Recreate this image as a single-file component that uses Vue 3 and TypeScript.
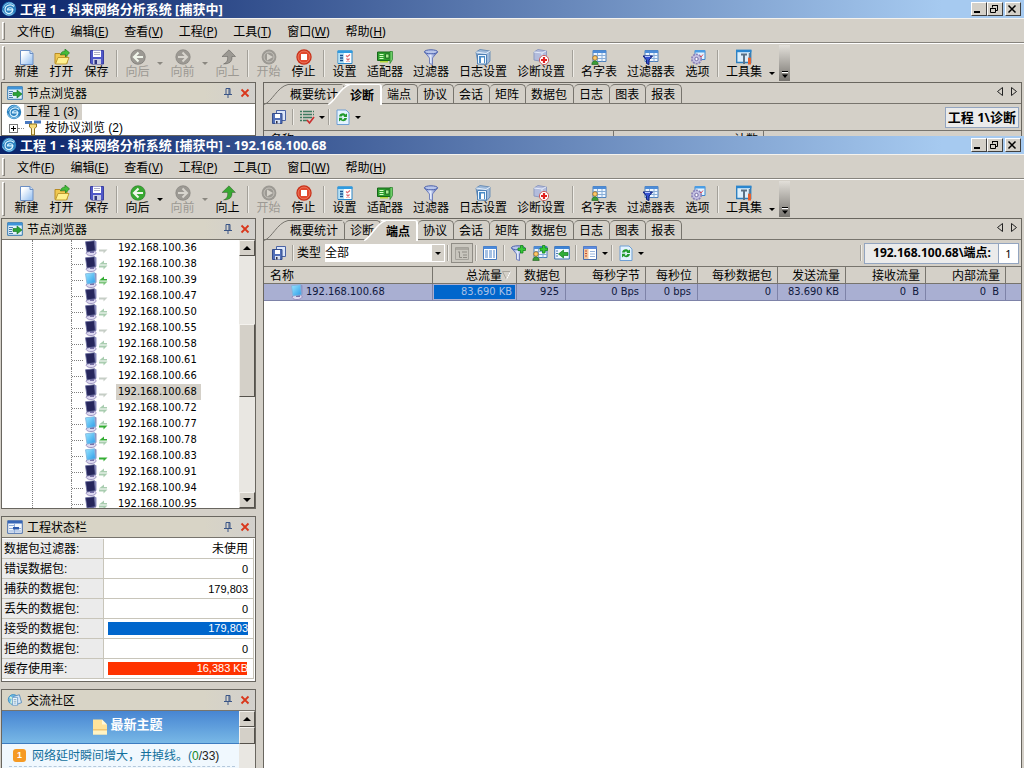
<script setup lang="ts">
import { ref } from 'vue'

interface Tool {
  label?: string
  icon?: string
  disabled?: boolean
  drop?: boolean
  sep?: boolean
}

interface Win {
  id: string
  title: string
  tab: string
  nav: boolean
  tools: Tool[]
}

const menus = [
  ['文件', 'F'],
  ['编辑', 'E'],
  ['查看', 'V'],
  ['工程', 'P'],
  ['工具', 'T'],
  ['窗口', 'W'],
  ['帮助', 'H'],
]

function toolbar(back: boolean): Tool[] {
  return [
    { label: '新建', icon: 'new' },
    { label: '打开', icon: 'open' },
    { label: '保存', icon: 'save' },
    { sep: true },
    { label: '向后', icon: 'back', disabled: !back, drop: true },
    { label: '向前', icon: 'fwd', disabled: true, drop: true },
    { label: '向上', icon: 'up', disabled: !back },
    { sep: true },
    { label: '开始', icon: 'start', disabled: true },
    { label: '停止', icon: 'stop' },
    { sep: true },
    { label: '设置', icon: 'setting' },
    { label: '适配器', icon: 'adapter' },
    { label: '过滤器', icon: 'filter' },
    { label: '日志设置', icon: 'log' },
    { label: '诊断设置', icon: 'diag' },
    { sep: true },
    { label: '名字表', icon: 'names' },
    { label: '过滤器表', icon: 'ftable' },
    { label: '选项', icon: 'options' },
    { sep: true },
    { label: '工具集', icon: 'tools', drop: true },
  ]
}

const windows: Win[] = [
  { id: 'project', title: '工程 1 - 科来网络分析系统 [捕获中]', tab: '诊断', nav: false, tools: toolbar(false) },
  { id: 'host', title: '工程 1 - 科来网络分析系统 [捕获中] - 192.168.100.68', tab: '端点', nav: true, tools: toolbar(true) },
]

const tabs = ['概要统计', '诊断', '端点', '协议', '会话', '矩阵', '数据包', '日志', '图表', '报表']

const off = '#c6cec6'
const dim = '#a9cdb0'
const lit = '#35ad35'

const hosts = [
  { ip: 36, on: false, up: '', down: off },
  { ip: 38, on: false, up: dim, down: dim },
  { ip: 39, on: true, up: lit, down: '#7cc47c' },
  { ip: 47, on: false, up: '', down: off },
  { ip: 50, on: false, up: dim, down: dim },
  { ip: 55, on: false, up: '', down: off },
  { ip: 58, on: false, up: dim, down: dim },
  { ip: 61, on: false, up: dim, down: dim },
  { ip: 66, on: false, up: '', down: off },
  { ip: 68, on: false, up: '', down: off },
  { ip: 72, on: false, up: dim, down: dim },
  { ip: 77, on: true, up: dim, down: lit },
  { ip: 78, on: true, up: lit, down: dim },
  { ip: 83, on: true, up: '', down: lit },
  { ip: 91, on: false, up: dim, down: dim },
  { ip: 94, on: false, up: dim, down: dim },
  { ip: 95, on: false, up: dim, down: dim },
]

const stats = [
  { name: '数据包过滤器:', value: '未使用' },
  { name: '错误数据包:', value: '0' },
  { name: '捕获的数据包:', value: '179,803' },
  { name: '丢失的数据包:', value: '0' },
  { name: '接受的数据包:', value: '179,803', color: '#0066cc', fill: 100 },
  { name: '拒绝的数据包:', value: '0' },
  { name: '缓存使用率:', value: '16,383 KB', color: '#ff3300', fill: 99 },
]

const columns = [
  { name: '名称', width: 169, value: '192.168.100.68' },
  { name: '总流量', width: 84, value: '83.690 KB' },
  { name: '数据包', width: 49, value: '925' },
  { name: '每秒字节', width: 80, value: '0 Bps' },
  { name: '每秒位', width: 52, value: '0 bps' },
  { name: '每秒数据包', width: 80, value: '0' },
  { name: '发送流量', width: 68, value: '83.690 KB' },
  { name: '接收流量', width: 80, value: '0  B' },
  { name: '内部流量', width: 80, value: '0  B' },
]

const kind = ref('全部')
</script>

<template>
  <svg class="defs" aria-hidden="true">
    <defs>
      <linearGradient id="g-blue" x1="0" y1="0" x2="1" y2="1">
        <stop offset=".2" stop-color="#fff" /><stop offset="1" stop-color="#8fbcf0" />
      </linearGradient>
      <linearGradient id="g-funnel" x1="0" x2="1">
        <stop offset="0" stop-color="#5a6fc0" /><stop offset=".45" stop-color="#e6eeff" /><stop offset="1" stop-color="#3d52a8" />
      </linearGradient>
      <linearGradient id="g-screen" x1="0" y1="0" x2="1" y2="1">
        <stop offset="0" stop-color="#9be6ff" /><stop offset="1" stop-color="#2a9be8" />
      </linearGradient>
    </defs>
    <symbol id="i-logo" viewBox="0 0 16 16">
      <circle cx="8" cy="8" r="7.2" fill="#2b80bf" />
      <path d="M14 4.5A6.6 6.6 0 0 0 2.4 6.8M1.6 9.5a6.6 6.6 0 0 0 11 2.5" fill="none" stroke="#8fcdf0" />
      <path d="M12.500 8.800H6.500c0-2.300 4.600-3 5.200-.3.300 3-3 4.800-5.600 3.600-3-1.400-2.800-6 .4-7.600 2.400-1 4.800-.6 6.500 1" fill="none" stroke="#d8f2ff" stroke-width="1.200" />
    </symbol>
    <symbol id="i-new" viewBox="0 0 16 16">
      <path d="M1.500 1.500h9.500l3 3v11H1.500z" fill="url(#g-blue)" stroke="#6a8ec4" />
      <path d="M11 1.500v3h3" fill="#cfe2fa" stroke="#6a8ec4" />
    </symbol>
    <symbol id="i-open" viewBox="0 0 16 16">
      <path d="M1 4.500h5L7 6h6v8.500H1z" fill="#f0c850" stroke="#b88c24" />
      <path d="M1.500 15 4 8.500h11L12.500 15z" fill="#fff08e" stroke="#c09a30" />
      <path d="M6.500 6c.5-3 2.500-4 4.500-3.800V0l4.500 3.800L11.500 8V5.500c-2-.4-3.500-.3-5 .5z" fill="#45bd3a" stroke="#1c7d1c" stroke-width=".7" />
    </symbol>
    <symbol id="i-save" viewBox="0 0 16 16">
      <path d="M1.500 1.500h13v13.500h-12l-1-1z" fill="#5058c8" stroke="#3a3fa0" />
      <path d="M4 1.500h8v6.500H4z" fill="#fff" /><path d="M5 3.500h6M5 5.500h6" stroke="#b0b0c4" />
      <path d="M4 10h8v5H4z" fill="#c9cce4" /><path d="M5.500 11h2.500v4H5.500z" fill="#303680" />
    </symbol>
    <symbol id="i-back" viewBox="0 0 16 16">
      <circle cx="8" cy="8" r="7.400" fill="currentColor" stroke="#00000030" />
      <path d="M8.500 3.500 4 8l4.500 4.500M4.500 8H13" fill="none" stroke="#f0f5ea" stroke-width="2.200" />
    </symbol>
    <symbol id="i-fwd" viewBox="0 0 16 16">
      <circle cx="8" cy="8" r="7.400" fill="currentColor" stroke="#00000020" />
      <path d="M7.500 3.500 12 8l-4.500 4.500M11.500 8H3" fill="none" stroke="#d8d5ce" stroke-width="2" />
    </symbol>
    <symbol id="i-up" viewBox="0 0 16 16">
      <path d="M9 .8 15.500 7.500H12c.5 5-2.500 7.500-8.500 7.500 3.500-1.500 4.500-4 4-7.500H2z" fill="currentColor" stroke="#00000050" stroke-width=".8" />
    </symbol>
    <symbol id="i-start" viewBox="0 0 16 16">
      <circle cx="8" cy="8" r="7.400" fill="currentColor" /><circle cx="8" cy="8" r="5" fill="none" stroke="#c5c2bb" />
      <path d="M6 4.500 12 8l-6 3.500z" fill="#d5d2ca" />
    </symbol>
    <symbol id="i-stop" viewBox="0 0 16 16">
      <circle cx="8" cy="8" r="7.700" fill="#c93018" /><circle cx="8" cy="8" r="6" fill="#e2492e" stroke="#f0917a" stroke-width=".7" />
      <rect x="5" y="5" width="6" height="6" fill="#fff" />
    </symbol>
    <symbol id="i-setting" viewBox="0 0 16 16">
      <path d="M1 2h14v12.500H1z" fill="#fff" stroke="#2a86c8" /><path d="M.5 1.500h15V4H.5z" fill="#2f9be0" />
      <path d="M1.500 4H7v10H1.500z" fill="#b6e2f6" /><path d="M3 6.500h3M3 9h3M3 11.500h3" stroke="#174f91" stroke-width="1.500" />
      <path d="m9 6.500 1.300 1.200L13 5.500M9.500 9.500l3 3m0-3-3 3" fill="none" stroke="#e06a70" stroke-width="1.200" />
    </symbol>
    <symbol id="i-adapter" viewBox="0 0 16 16">
      <path d="M.5 3H14v8.500H.5z" fill="#2e9f2e" stroke="#176619" /><path d="M2.500 5h4v1h-4zM2.500 7h4v1h-4zM2.500 9h4v1h-4z" fill="#d8ffc4" />
      <path d="M8.500 5h3.500v4H8.500z" fill="#a4ec8c" stroke="#165d1c" stroke-width=".8" /><path d="M3 12h8v1.500H3z" fill="#b2d838" />
      <path d="M13 2.500h2.500v8L13 14.500z" fill="#6ecf68" stroke="#237d26" stroke-width=".7" />
    </symbol>
    <symbol id="i-filter" viewBox="0 0 16 16">
      <path d="M1.500 3 6.500 9v5.500l3 1V9l5-6z" fill="url(#g-funnel)" stroke="#5a6cb4" stroke-width=".8" />
      <ellipse cx="8" cy="2.800" rx="6.600" ry="2" fill="#b9c6ea" stroke="#4a60ac" />
    </symbol>
    <symbol id="i-log" viewBox="0 0 16 16">
      <path d="m1 3 4-2.500 10 1.500V12l-3 3.500-9-1z" fill="#9db9da" stroke="#6d8fb5" /><path d="m1 3 10 1.500L15 2" fill="none" stroke="#e4effa" />
      <path d="M2.500 5.500h9V15h-9z" fill="#eef7ff" stroke="#4f80b4" /><path d="M4 7h6v7H4z" fill="#4a8cc8" /><path d="M6 8.500h3v5.500H6z" fill="#fff" />
    </symbol>
    <symbol id="i-diag" viewBox="0 0 16 16">
      <path d="m1 3 4-2.500 8.500 1.500V9l-4 3.500L1 11z" fill="#b3bcdc" stroke="#8d9ac0" /><path d="m1 3 8 1v8M9 4l4-2" fill="none" stroke="#e6ecfa" />
      <circle cx="11" cy="11" r="4.600" fill="#fff" stroke="#c96060" /><path d="M11 8v6M8 11h6" stroke="#e02222" stroke-width="2.200" />
    </symbol>
    <symbol id="i-table" viewBox="0 0 16 16">
      <path d="M2 1.500h13v11H2z" fill="#eef6ff" stroke="#4d80bb" /><path d="M2 1.500h13V4H2z" fill="#4c8cd8" />
      <path d="M2 6.500h13M2 9.500h13M6.500 4v8.500M11 4v8.500" stroke="#88aed8" />
    </symbol>
    <symbol id="i-names" viewBox="0 0 16 16">
      <use href="#i-table" /><circle cx="4" cy="9" r="2.300" fill="#ffca6a" stroke="#8c5c14" stroke-width=".7" />
      <path d="M.8 15.500c0-5 6.400-5 6.400 0z" fill="#3a9c38" stroke="#1d621e" stroke-width=".6" />
    </symbol>
    <symbol id="i-ftable" viewBox="0 0 16 16">
      <use href="#i-table" /><path d="M0 7h9.500L6 11v4.500L3.500 14.500V11z" fill="#3451d0" stroke="#101f78" /><path d="M2 7.500h5" stroke="#b8c8ff" />
    </symbol>
    <symbol id="i-options" viewBox="0 0 16 16">
      <path d="M5 1.500h10v9H5z" fill="#e5f4ff" stroke="#3b86cf" /><path d="M5 1h10v2.500H5z" fill="#4a9de4" />
      <circle cx="6.500" cy="10" r="4.700" fill="#c4c0e2" stroke="#8a80b8" stroke-width="1.600" stroke-dasharray="2 1" /><circle cx="6.500" cy="10" r="1.700" fill="#fff" stroke="#746aa5" />
      <path d="m10 7 1 1 2-2.500" fill="none" stroke="#d64b5a" />
    </symbol>
    <symbol id="i-tools" viewBox="0 0 16 16">
      <path d="M.7 1.500h14v12H.7z" fill="#dceffc" stroke="#2e7fbe" stroke-width="1.400" /><path d="M0 .8h15.400v2.400H0z" fill="#2a86cf" />
      <path d="M5 4.500h6v2H9V15H7V6.500H5z" fill="#5b7184" /><path d="M12 8.500h3V15.500h-3z" fill="#e8602c" /><path d="M13.500 4v5" stroke="#667d92" stroke-width="1.500" />
    </symbol>
    <symbol id="i-node" viewBox="0 0 16 14">
      <path d="M.7.700h14.600v12.600H.7z" fill="#e2f1fb" stroke="#3077b0" /><path d="M1 1h14v2.500H1z" fill="#3f94d8" />
      <path d="M2 5.500h4M2 7.500h3M2 9.500h3M2 11.500h4" stroke="#4a7cac" /><path d="M6 6.500h4V4l5 4-5 4V9.500H6z" fill="#2aa336" stroke="#12701d" stroke-width=".6" />
    </symbol>
    <symbol id="i-status" viewBox="0 0 16 14">
      <path d="M.7.700h14.600v12.600H.7z" fill="#f2f7fd" stroke="#456cab" /><path d="M1 1h14v2.500H1z" fill="#3766b6" />
      <path d="M2 5.500h5M2 8.500h12M2 11h12M7.500 4v9" stroke="#8facd8" /><path d="M6 7h6v2.500H6z" fill="#2c5aad" />
    </symbol>
    <symbol id="i-comm" viewBox="0 0 16 16">
      <circle cx="6" cy="7.500" r="5.700" fill="#6bbce8" stroke="#3b8cc0" /><path d="M2 5c2 1 3 0 3 2s-2 3-1 5" stroke="#d8f8d8" stroke-width="2" fill="none" />
      <path d="m6 4 7-2 2.500 9-7 2.500z" fill="#d8e8f8" stroke="#5288b8" /><path d="M5 5h6v9H5z" fill="#eaf4fd" stroke="#6c9cc8" /><path d="M6.500 7.500h3M6.500 9.500h3M6.500 11.500h3" stroke="#8ab" />
    </symbol>
    <symbol id="i-pin" viewBox="0 0 10 10">
      <path d="M3 .5v5.500M3 .5h4M7 .5v5.500M1 6.500h8M5 7v3" fill="none" stroke="#3a5586" /><path d="M5.500 1h1v5h-1z" fill="#3a5586" />
    </symbol>
    <symbol id="i-close" viewBox="0 0 10 10">
      <path d="m1.500 1.500 7 7m0-7-7 7" stroke="#d9371c" stroke-width="1.800" />
    </symbol>
    <symbol id="i-stand" viewBox="0 0 14 16">
      <path d="M2 13c2-3 9-3.500 10-.5.500 3.500-9 4.500-10 .5z" fill="#dcd8f0" stroke="#8a80b4" stroke-width=".8" /><path d="M6 10.500 10 10v3H6z" fill="#7a72a8" />
      <path d="m10.500.5 2 1v9l-1.500.5z" fill="#8d8fc0" />
    </symbol>
    <symbol id="i-mon" viewBox="0 0 14 16">
      <use href="#i-stand" /><path d="M1.500 1.800 10.500.7l.8 10L3 12z" fill="#26265c" stroke="#6b6f9f" stroke-width=".8" />
    </symbol>
    <symbol id="i-monon" viewBox="0 0 14 16">
      <use href="#i-stand" /><path d="M1.500 1.800 10.500.7l.8 10L3 12z" fill="url(#g-screen)" stroke="#7fb2dc" stroke-width=".8" />
    </symbol>
    <symbol id="i-saveall" viewBox="0 0 16 16">
      <path d="M5.500 1.500h9v10h-9z" fill="#dbe6fa" stroke="#4a63a4" /><path d="M1.500 4.500h9.500v10H1.500z" fill="#5270b8" stroke="#344d8c" />
      <path d="M4 5h5v4H4z" fill="#fff" /><path d="M4 11h5v3.500H4z" fill="#d9e2f2" /><path d="M5 12h1.500v2.500H5z" fill="#334" />
    </symbol>
    <symbol id="i-check" viewBox="0 0 16 16">
      <path d="M1 2.500h14M1 5.500h14M1 8.500h12M1 11.500h7" stroke="#3d7a60" stroke-width="1.400" stroke-dasharray="2 1 9 1" /><path d="m8 11 2.500 3L15 8" fill="none" stroke="#c93030" stroke-width="1.700" />
    </symbol>
    <symbol id="i-refresh" viewBox="0 0 16 16">
      <path d="M2 1h9l3 3v11.500H2z" fill="#e4f3ff" stroke="#6e9fd4" />
      <path d="M4 7.500C4.500 4 9 3.500 10.300 5.500L12 4.500V8H8.500L9.300 7c-1-1-2.300-.5-2.500.5zM12 9c-.5 3.500-5 4-6.300 2L4 12.500V8.800h3.600l-.9 1.200c1 1 2.300.5 2.500-1z" fill="#229b2d" />
    </symbol>
    <symbol id="i-tree" viewBox="0 0 16 16">
      <path d="M1.500 2.500h13v12h-13z" fill="#c8c5bd" stroke="#a5a29b" /><path d="M1.500 4h13M4 7h2M5.500 7v5.500H8M8 7h5M9 10h4M9 12.500h4" fill="none" stroke="#8f8c85" />
    </symbol>
    <symbol id="i-list" viewBox="0 0 16 16">
      <path d="M1.500 1.500h13v13h-13z" fill="#fff" stroke="#4679bd" /><path d="M1.500 1.500h13V4h-13z" fill="#4a8adb" />
      <path d="M3 6h3M7 6h3M11 6h2M3 8h3M7 8h3M11 8h2M3 10h3M7 10h3M11 10h2M3 12h3M7 12h3M11 12h2" stroke="#4b82c8" />
    </symbol>
    <symbol id="i-plus" viewBox="0 0 16 16">
      <path d="M10.500.5h2.500v2.500h2.500v2.500H13V8h-2.500V5.500H8V3h2.500z" fill="#37c837" stroke="#11851b" stroke-width=".8" />
    </symbol>
    <symbol id="i-filteradd" viewBox="0 0 16 16"><use href="#i-filter" /><use href="#i-plus" /></symbol>
    <symbol id="i-nameadd" viewBox="0 0 16 16"><use href="#i-names" /><use href="#i-plus" /></symbol>
    <symbol id="i-import" viewBox="0 0 16 16">
      <path d="M.7 1.500h14.600v12.500H.7z" fill="#f0f8ff" stroke="#3d72b5" /><path d="M1 1.500h14V4H1z" fill="#3d83d5" />
      <path d="M2 6h2M2 8.500h2M2 11h2" stroke="#4a7ab5" /><path d="M14 7.500H9.500V5L4.500 9l5 4v-2.500H14z" fill="#2fae38" stroke="#137a1d" stroke-width=".7" />
    </symbol>
    <symbol id="i-cols" viewBox="0 0 16 16">
      <path d="M1.500 1.500h13v13h-13z" fill="#fff" stroke="#4b6fae" /><path d="M1.500 1.500h13V4h-13z" fill="#5c8ce0" /><path d="M2 4h4.500v10H2z" fill="#f3c79d" />
      <path d="M3 6h2M3 8.500h2M3 11h2" stroke="#c44a35" /><path d="M8 6.500h5M8 9h5M8 11.500h5" stroke="#98b4dc" />
    </symbol>
    <symbol id="i-proto" viewBox="0 0 16 16">
      <path d="M0 2.500h7M9 2h7" stroke="#4778c0" stroke-width="3" /><path d="M4.500 4h7v3l-2 1.500V15h-3V8.500L4.500 7z" fill="#f6db78" stroke="#907420" /><path d="M8 8v6" stroke="#fff" />
    </symbol>
    <symbol id="i-topic" viewBox="0 0 16 16">
      <path d="M1 .5h9l5 5v10H1z" fill="#ffe39a" /><path d="M10 .5v5h5z" fill="#fff8da" /><path d="M1 11h14" stroke="#e4a84a" /><path d="M1 11.500h14v4H1z" fill="#fff3c4" />
    </symbol>
  </svg>

  <main class="desk">
    <section v-for="w in windows" :key="w.id" class="win" :class="w.id">
      <header class="title">
        <svg class="ic"><use href="#i-logo" /></svg>
        <h1>{{ w.title }}</h1>
        <button class="cap" aria-label="最小化"><svg viewBox="0 0 12 10"><path d="M2 8h6" stroke="#000" stroke-width="2" /></svg></button>
        <button class="cap" aria-label="还原">
          <svg viewBox="0 0 12 10"><path d="M4.500 3.500v-2h5v5h-2M4 1.500h6M2.500 4.500h5v4h-5zM2 4.500h6" fill="none" stroke="#000" /></svg>
        </button>
        <button class="cap shut" aria-label="关闭"><svg viewBox="0 0 12 10"><path d="m2.500 1.500 7 7m0-7-7 7" stroke="#000" stroke-width="1.500" /></svg></button>
      </header>

      <nav class="menu">
        <i class="grip"></i>
        <button v-for="m in menus" :key="m[1]">{{ m[0] }}(<u>{{ m[1] }}</u>)</button>
      </nav>

      <div class="toolbar">
        <i class="grip"></i>
        <template v-for="(t, n) in w.tools" :key="n">
          <i v-if="t.sep" class="sep"></i>
          <template v-else>
            <button class="tool" :class="['t-' + t.icon, 'n' + t.label?.length]" :disabled="t.disabled">
              <svg class="ic"><use :href="'#i-' + t.icon" /></svg>
              <span>{{ t.label }}</span>
            </button>
            <button v-if="t.drop" class="drop" :class="{ low: t.icon === 'tools' }" :disabled="t.disabled" :aria-label="t.label + '选项'"></button>
          </template>
        </template>
        <button class="more" aria-label="更多"><svg viewBox="0 0 11 36"><path d="M3 27.500h6" stroke="#fff" /><path d="M3 26.500h6" stroke="#000" /><path d="M3 29.500h6L6 33z" fill="#000" /></svg></button>
      </div>

      <div class="body">
        <aside class="side">
          <section class="panel nodes">
            <header class="phead">
              <svg class="pic"><use href="#i-node" /></svg>
              <h2>节点浏览器</h2>
              <button aria-label="固定"><svg><use href="#i-pin" /></svg></button>
              <button aria-label="关闭"><svg><use href="#i-close" /></svg></button>
            </header>
            <div v-if="!w.nav" class="roots">
              <div class="root"><svg class="ic"><use href="#i-logo" /></svg><span class="picked">工程 1 (3)</span></div>
              <div class="root branch"><i class="expand"></i><i class="dash"></i><svg class="ic"><use href="#i-proto" /></svg><span>按协议浏览 (2)</span></div>
            </div>
            <div v-else class="tree">
              <ul>
                <li v-for="h in hosts" :key="h.ip">
                  <i class="twig"></i>
                  <svg class="mon"><use :href="h.on ? '#i-monon' : '#i-mon'" /></svg>
                  <svg class="flow" viewBox="0 0 9 10">
                    <path v-if="h.up" d="M0 4.500h8V3H5V.5z" :fill="h.up" />
                    <path d="M0 5.500h8.500L4.500 9.500V7.500H0z" :fill="h.down" />
                  </svg>
                  <span :class="{ picked: h.ip === 68 }">192.168.100.{{ h.ip }}</span>
                </li>
              </ul>
              <div class="scroll">
                <button class="go-up" aria-label="向上滚动"></button>
                <i class="track"></i>
                <i class="thumb"></i>
                <i class="track rest"></i>
                <button class="go-down" aria-label="向下滚动"></button>
              </div>
            </div>
          </section>

          <template v-if="w.nav">
            <section class="panel">
              <header class="phead">
                <svg class="pic"><use href="#i-status" /></svg>
                <h2>工程状态栏</h2>
                <button aria-label="固定"><svg><use href="#i-pin" /></svg></button>
                <button aria-label="关闭"><svg><use href="#i-close" /></svg></button>
              </header>
              <table class="stats">
                <tbody>
                  <tr v-for="s in stats" :key="s.name">
                    <th scope="row">{{ s.name }}</th>
                    <td>
                      <div v-if="s.color" class="bar"><i :style="{ width: s.fill + '%', background: s.color }"></i><span>{{ s.value }}</span></div>
                      <span v-else>{{ s.value }}</span>
                    </td>
                  </tr>
                </tbody>
              </table>
            </section>

            <section class="panel last">
              <header class="phead">
                <svg class="pic"><use href="#i-comm" /></svg>
                <h2>交流社区</h2>
                <button aria-label="固定"><svg><use href="#i-pin" /></svg></button>
                <button aria-label="关闭"><svg><use href="#i-close" /></svg></button>
              </header>
              <div class="forum">
                <div class="posts">
                  <h3><svg class="ic"><use href="#i-topic" /></svg><span>最新主题</span></h3>
                  <a class="post" href="#topic"><b>1</b><span>网络延时瞬间增大，并掉线。(<em>0</em><span class="total">/33)</span></span></a>
                </div>
                <div class="scroll">
                  <button class="go-up" aria-label="向上滚动"></button>
                  <i class="thumb short"></i>
                  <i class="track rest"></i>
                </div>
              </div>
            </section>
          </template>
        </aside>

        <section class="view">
          <div class="tabs" role="tablist">
            <button v-for="(t, n) in tabs" :key="t" role="tab" class="tab" :class="{ first: n === 0, active: t === w.tab }" :aria-selected="t === w.tab">
              <svg v-if="n === 0" class="slope" viewBox="0 0 24 21"><path d="M0 20.500C8 18 13 3 24 .5" fill="none" stroke="#77746e" /></svg>
              <svg v-if="t === w.tab" class="slant" viewBox="0 0 22 21"><path d="M0 21C7 18 12 3 22 .5V21z" fill="#d4d0c8" /><path d="M0 20.500C7 18 12 3 22 .5" fill="none" stroke="#fff" stroke-width="1.500" /></svg>
              <span>{{ t }}</span>
            </button>
            <span class="space"></span>
            <button class="step" aria-label="上一个"><svg viewBox="0 0 6 9"><path d="M5.500.5v8l-5-4z" fill="none" stroke="#222" /></svg></button>
            <button class="step" aria-label="下一个"><svg viewBox="0 0 6 9"><path d="M.5.500v8l5-4z" fill="none" stroke="#222" /></svg></button>
          </div>

          <div v-if="!w.nav" class="bar2">
            <button class="sb" aria-label="保存"><svg class="ic"><use href="#i-saveall" /></svg></button>
            <i class="sep"></i>
            <button class="sb" aria-label="选择"><svg class="ic"><use href="#i-check" /></svg></button>
            <button class="drop" aria-label="选择选项"></button>
            <i class="sep"></i>
            <button class="sb" aria-label="刷新"><svg class="ic"><use href="#i-refresh" /></svg></button>
            <button class="drop" aria-label="刷新间隔"></button>
            <span class="space"></span>
            <output class="path">工程 1\诊断</output>
          </div>
          <div v-else class="bar2">
            <button class="sb" aria-label="保存"><svg class="ic"><use href="#i-saveall" /></svg></button>
            <i class="sep"></i>
            <label for="kind">类型</label>
            <span class="pick"><select id="kind" v-model="kind"><option>全部</option></select><i></i></span>
            <i class="sep"></i>
            <button class="sb pressed" aria-label="树"><svg class="ic"><use href="#i-tree" /></svg></button>
            <i class="sep"></i>
            <button class="sb" aria-label="列表"><svg class="ic"><use href="#i-list" /></svg></button>
            <i class="sep"></i>
            <button class="sb" aria-label="添加过滤器"><svg class="ic"><use href="#i-filteradd" /></svg></button>
            <button class="sb" aria-label="添加名字"><svg class="ic"><use href="#i-nameadd" /></svg></button>
            <button class="sb" aria-label="定位"><svg class="ic"><use href="#i-import" /></svg></button>
            <i class="sep"></i>
            <button class="sb" aria-label="列"><svg class="ic"><use href="#i-cols" /></svg></button>
            <button class="drop" aria-label="选择列"></button>
            <i class="sep"></i>
            <button class="sb" aria-label="刷新"><svg class="ic"><use href="#i-refresh" /></svg></button>
            <button class="drop" aria-label="刷新间隔"></button>
            <span class="space"></span>
            <i class="sep"></i>
            <output class="path">192.168.100.68\端点:<b>1</b></output>
          </div>

          <table v-if="!w.nav" class="grid diag">
            <thead>
              <tr><th class="name">名称</th><th class="count">计数</th><th></th></tr>
            </thead>
          </table>
          <table v-else class="grid">
            <colgroup>
              <col v-for="c in columns" :key="c.name" :style="{ width: c.width + 'px' }" />
              <col />
            </colgroup>
            <thead>
              <tr>
                <th v-for="(c, n) in columns" :key="c.name" :class="{ name: n === 0, sorted: n === 1 }">
                  {{ c.name }}<svg v-if="n === 1" viewBox="0 0 9 9"><path d="M.5.500h8l-4 8z" fill="none" stroke="#aaa69e" /><path d="m4.500 8.500 4-8" stroke="#fff" /></svg>
                </th>
                <th></th>
              </tr>
            </thead>
            <tbody>
              <tr>
                <td v-for="(c, n) in columns" :key="c.name" :class="{ name: n === 0, total: n === 1 }"><svg v-if="n === 0" class="mon"><use href="#i-monon" /></svg><span>{{ c.value }}</span></td>
                <td></td>
              </tr>
            </tbody>
          </table>
        </section>
      </div>
    </section>
  </main>
</template>

<style>
html,
body {
  margin: 0;
  background: #d4d0c8;
}
</style>

<style scoped>
* {
  box-sizing: border-box;
}
.defs {
  position: absolute;
  width: 0;
  height: 0;
}
.desk {
  display: grid;
  grid-template-rows: 136px minmax(0, 1fr);
  height: 100vh;
  overflow: hidden;
  font: 12px/16px 'Liberation Sans', 'Noto Sans CJK SC', sans-serif;
  color: #000;
  background: #d4d0c8;
}
button {
  margin: 0;
  padding: 0;
  border: 0;
  background: none;
  font: inherit;
  color: inherit;
  white-space: nowrap;
}
svg {
  display: block;
  flex: none;
}
i {
  display: block;
  flex: none;
}
h1,
h2,
h3 {
  margin: 0;
  font-size: 12px;
}
.ic {
  width: 16px;
  height: 16px;
}
.space {
  flex: 1;
}
.win {
  display: flex;
  flex-direction: column;
  min-width: 0;
  min-height: 0;
  overflow: hidden;
  background: #d4d0c8;
}
.title {
  flex: none;
  display: flex;
  align-items: center;
  height: 18px;
  padding: 0 3px 0 1px;
  background: linear-gradient(90deg, #0a246a, #a6caf0 92%);
}
.title h1 {
  flex: 1;
  margin-left: 3px;
  font: bold 13px/16px 'Noto Sans', 'Noto Sans CJK SC', sans-serif;
  color: #fff;
  white-space: nowrap;
}
.cap {
  width: 16px;
  height: 14px;
  background: #d4d0c8;
  border: 1px solid;
  border-color: #fff #404040 #404040 #fff;
}
.cap svg {
  width: 12px;
  height: 10px;
}
.shut {
  margin-left: 2px;
}
.menu {
  flex: none;
  display: flex;
  align-items: center;
  height: 25px;
  padding-left: 2px;
  border-top: 1px solid #f4f2ee;
  border-bottom: 1px solid #86837d;
}
.menu button {
  height: 22px;
  padding: 2px 8px 0;
  font-family: 'Noto Sans', 'Noto Sans CJK SC', sans-serif;
}
.grip {
  width: 3px;
  height: 18px;
  margin-right: 4px;
  border: 1px solid;
  border-color: #fff #86837d #86837d #fff;
}
.toolbar {
  flex: none;
  display: flex;
  align-items: center;
  height: 39px;
  padding-left: 2px;
  border-top: 1px solid #fff;
}
.toolbar .grip {
  height: 34px;
}
.tool {
  display: flex;
  flex: none;
  flex-direction: column;
  align-items: center;
  width: 35px;
  height: 36px;
  padding-top: 4px;
}
.tool span {
  line-height: 14px;
}
.n3 {
  width: 46px;
}
.n4 {
  width: 58px;
}
.t-back svg,
.t-up svg {
  color: #38a832;
}
.tool:disabled,
.tool:disabled svg {
  color: #9c9993;
}
.sep {
  width: 2px;
  height: 27px;
  margin: 0 2px;
  border-left: 1px solid #a3a099;
  border-right: 1px solid #eeece7;
}
.drop {
  display: flex;
  align-items: center;
  justify-content: center;
  width: 10px;
  height: 18px;
}
.drop::after {
  content: '';
  border: 3px solid transparent;
  border-top-color: #000;
  border-bottom: 0;
}
.drop:disabled::after {
  border-top-color: #8a8780;
}
.drop.low {
  align-self: flex-end;
}
.more {
  width: 11px;
  height: 36px;
  margin-left: 2px;
  background: linear-gradient(#e2dfd9, #77746f);
}
.more svg {
  width: 11px;
  height: 36px;
}
.body {
  flex: 1;
  display: flex;
  gap: 7px;
  min-height: 0;
  padding: 0 2px 0 1px;
}
.side {
  flex: none;
  display: flex;
  flex-direction: column;
  gap: 7px;
  width: 255px;
}
.panel {
  flex: none;
  display: flex;
  flex-direction: column;
  border: 1px solid #69665f;
  background: #fff;
}
.nodes {
  flex: 1;
  min-height: 0;
}
.last {
  border-bottom: 0;
}
.phead {
  flex: none;
  display: flex;
  align-items: center;
  height: 21px;
  padding: 0 5px;
  background: linear-gradient(90deg, #d8d4c6 80%, #d2d0cc);
  border-bottom: 1px solid #77746d;
}
.phead h2 {
  flex: 1;
  margin-left: 4px;
  padding-top: 1px;
  font-weight: normal;
}
.phead button {
  margin-left: 7px;
}
.phead button svg {
  width: 10px;
  height: 10px;
}
.pic {
  width: 16px;
  height: 14px;
}
.root {
  display: flex;
  align-items: center;
  height: 16px;
  padding-left: 4px;
}
.root span {
  padding: 0 4px 0 2px;
  margin-left: 2px;
}
.branch {
  padding-left: 7px;
}
.expand {
  width: 9px;
  height: 9px;
  border: 1px solid #777;
  background: linear-gradient(#000, #000) center / 5px 1px no-repeat, linear-gradient(#000, #000) center / 1px 5px no-repeat;
}
.dash {
  width: 6px;
  margin-right: 1px;
  border-top: 1px dotted #888;
}
.picked {
  background: #d4d0c8;
}
.tree {
  flex: 1;
  display: flex;
  min-height: 0;
}
.tree ul {
  flex: 1;
  min-width: 0;
  margin: 0 0 0 30px;
  padding: 0 0 0 38px;
  list-style: none;
  overflow: hidden;
  border-left: 1px dotted #808080;
}
.tree li {
  display: flex;
  align-items: center;
  height: 16px;
  border-left: 1px dotted #808080;
  font: 11px/16px 'DejaVu Sans Condensed', 'Noto Sans', sans-serif;
}
.twig {
  width: 11px;
  border-top: 1px dotted #808080;
}
.mon {
  width: 14px;
  height: 16px;
}
.tree .mon {
  margin-left: 1px;
}
.flow {
  width: 9px;
  height: 10px;
  margin: 2px 8px 0 1px;
}
.tree li span {
  padding: 0 4px 0 2px;
}
.scroll {
  flex: none;
  display: flex;
  flex-direction: column;
  width: 16px;
  background: #e9e7e2;
}
.scroll button,
.thumb {
  display: flex;
  align-items: center;
  justify-content: center;
  flex: none;
  width: 16px;
  height: 16px;
  background: #d4d0c8;
  border: 1px solid;
  border-color: #f4f2ee #55524c #55524c #f4f2ee;
}
.go-up::after {
  content: '';
  border: 4px solid transparent;
  border-bottom-color: #000;
  border-top: 0;
}
.go-down::after {
  content: '';
  border: 4px solid transparent;
  border-top-color: #000;
  border-bottom: 0;
}
.track {
  flex: 68 0 0;
}
.track.rest {
  flex: 95 0 0;
}
.thumb {
  height: 73px;
}
.thumb.short {
  height: 17px;
}
.stats {
  width: 100%;
  padding: 1px 1px 2px 0;
  border-collapse: separate;
  border-spacing: 0;
}
.stats th,
.stats td {
  height: 20px;
  padding: 0 2px;
  border-bottom: 1px solid #c8c5ba;
  line-height: 16px;
}
.stats th {
  width: 102px;
  background: #ebebeb;
  border-right: 1px solid #c8c5ba;
  font-weight: normal;
  text-align: left;
  white-space: nowrap;
}
.stats td {
  padding: 0 5px 0 4px;
  border-right: 1px solid #c8c5ba;
  text-align: right;
  font-size: 11px;
}
.stats tr:first-child td {
  font-size: 12px;
}
.bar {
  position: relative;
  height: 13px;
  line-height: 13px;
  color: #fff;
}
.bar i {
  height: 13px;
}
.bar span {
  position: absolute;
  right: 0;
  top: 0;
}
.forum {
  display: flex;
  height: 57px;
}
.posts {
  flex: 1;
  background: #f0f8fe;
}
.posts h3 {
  display: flex;
  justify-content: center;
  align-items: center;
  gap: 2px;
  height: 33px;
  padding-left: 14px;
  background: linear-gradient(#4785d2, #78b8e6);
  border-bottom: 1px solid #3d7cc0;
  font-size: 13px;
  color: #fff;
}
.posts h3 span {
  padding-bottom: 4px;
}
.post {
  display: flex;
  align-items: center;
  gap: 6px;
  height: 23px;
  margin: 0 4px 0 7px;
  padding: 1px 0 0 4px;
  border-bottom: 1px dashed #b4c8dc;
  color: #12709c;
  text-decoration: none;
  white-space: nowrap;
}
.post b {
  width: 13px;
  height: 13px;
  border-radius: 3px;
  background: #f59a24;
  font-size: 9px;
  line-height: 13px;
  color: #fff;
  text-align: center;
}
.post em {
  font-style: normal;
  color: #16881c;
}
.post .total {
  color: #222;
}
.view {
  flex: 1;
  min-width: 0;
  background: #fff;
  border: 1px solid #69665f;
  border-bottom: 0;
}
.tabs {
  display: flex;
  height: 21px;
  background: #d4d0c8;
  border-bottom: 1px solid #77746d;
}
.tab {
  position: relative;
  flex: none;
  height: 20px;
  margin-top: 1px;
  padding: 1px 6px 0 5px;
  border: 1px solid #77746d;
  border-width: 1px 1px 0 0;
  border-radius: 5px 5px 0 0;
  line-height: 16px;
}
.tab.first {
  padding-left: 26px;
  border-top-color: transparent;
  background: linear-gradient(#77746d, #77746d) 24px 0 / 100% 1px no-repeat;
  background-origin: border-box;
}
.slope {
  position: absolute;
  left: 0;
  top: -1px;
  width: 24px;
  height: 21px;
}
.slant {
  position: absolute;
  right: 100%;
  top: -1px;
  width: 22px;
  height: 21px;
  margin-right: -5px;
}
.tab.active {
  z-index: 1;
  height: 21px;
  padding-right: 6px;
  background: #d4d0c8;
  border-color: #fff;
  border-right: 2px solid #fff;
  border-radius: 0 3px 0 0;
  font-weight: bold;
}
.tab span {
  position: relative;
}
.step {
  width: 14px;
  height: 16px;
}
.step svg {
  width: 6px;
  height: 9px;
  margin: 0 auto;
}
.bar2 {
  display: flex;
  align-items: center;
  height: 27px;
  padding: 0 2px 0 4px;
  background: #d4d0c8;
  border-bottom: 1px solid #77746d;
}
.bar2 .sep {
  height: 16px;
}
.bar2 .drop {
  width: 8px;
}
.sb {
  display: flex;
  align-items: center;
  justify-content: center;
  width: 22px;
  height: 20px;
  flex: none;
}
.pressed {
  border: 1px solid #8f8c85;
  background: #cbc8c0;
}
.bar2 label {
  margin: 0 4px 0 1px;
}
.pick {
  display: flex;
  align-items: center;
  width: 120px;
  height: 18px;
  background: #fff;
}
.pick select {
  flex: 1;
  height: 18px;
  padding: 0;
  appearance: none;
  border: 0;
  background: #fff;
  font: inherit;
  color: #000;
}
.pick i {
  display: flex;
  align-items: center;
  justify-content: center;
  width: 12px;
  height: 16px;
  margin-right: 1px;
  background: #d4d0c8;
}
.pick i::after {
  content: '';
  border: 3px solid transparent;
  border-top-color: #000;
  border-bottom: 0;
}
.path {
  display: flex;
  align-items: center;
  height: 21px;
  padding: 0 2px;
  border: 1px solid #93a5c0;
  background: #ebebeb;
  font: bold 13px/18px 'Noto Sans', 'Noto Sans CJK SC', sans-serif;
  white-space: nowrap;
}
.host .path {
  padding: 0 0 0 8px;
  font-size: 12px;
}
.path b {
  width: 20px;
  margin-left: 7px;
  border-left: 1px solid #93a5c0;
  background: #fff;
  font-weight: normal;
  font-size: 11px;
  line-height: 19px;
  text-align: center;
}
.grid {
  width: 100%;
  table-layout: fixed;
  border-collapse: separate;
  border-spacing: 0;
}
.grid th {
  height: 17px;
  padding: 2px 5px 0 2px;
  background: #d4d0c8;
  border-right: 1px solid #77746d;
  border-bottom: 1px solid #77746d;
  font-weight: normal;
  line-height: 14px;
  text-align: right;
  white-space: nowrap;
}
.grid th:last-child,
.grid td:last-child {
  border-right: 0;
}
.grid th.name {
  padding-left: 6px;
  text-align: left;
}
.grid th.sorted svg {
  display: inline-block;
  width: 9px;
  height: 9px;
}
.diag .name {
  width: 350px;
}
.diag .count {
  width: 150px;
}
.grid td {
  height: 17px;
  padding: 0 6px 0 2px;
  background: #a9afd2;
  border-right: 1px solid #7e83a8;
  border-bottom: 1px solid #7e83a8;
  font: 11px/16px 'DejaVu Sans Condensed', 'Noto Sans', sans-serif;
  color: #10183c;
  text-align: right;
  white-space: pre;
}
.grid td .mon {
  display: inline-block;
  vertical-align: top;
  margin: 0 2px 0 24px;
}
.grid td.name {
  text-align: left;
}
.grid td.total {
  padding-right: 4px;
  background: #0066cc;
  box-shadow: inset 0 0 0 1px #a9afd2;
  color: #a9c0e6;
}
</style>
